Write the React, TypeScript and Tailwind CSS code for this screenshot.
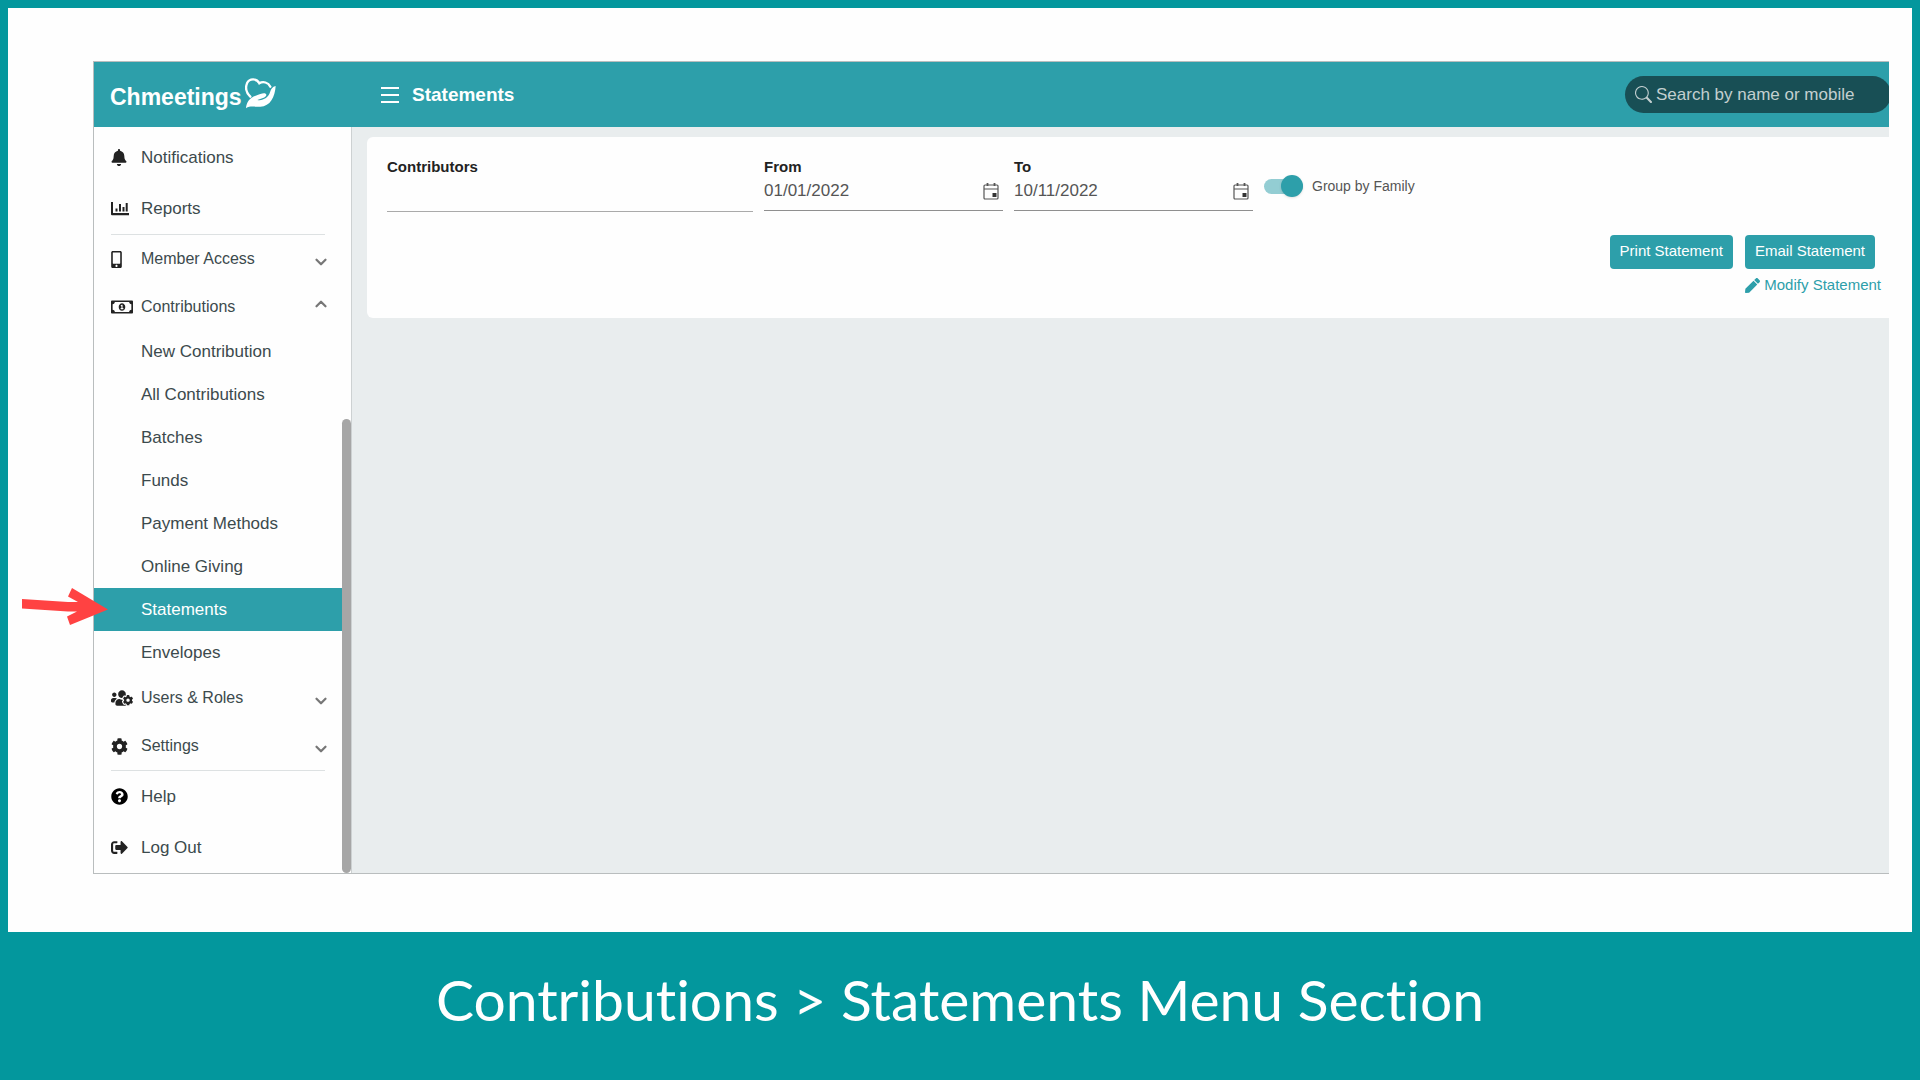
import { useState } from 'react';
import type { ReactNode } from 'react';
import { ChevronDown, ChevronUp } from 'lucide-react';
import { FaBell, FaCog, FaMobileAlt, FaPen, FaQuestionCircle, FaRegMoneyBillAlt, FaSignOutAlt, FaUsersCog } from 'react-icons/fa';
import { BsSearch } from 'react-icons/bs';

const contributionLinks = [
    'New Contribution',
    'All Contributions',
    'Batches',
    'Funds',
    'Payment Methods',
    'Online Giving',
    'Statements',
    'Envelopes',
];

function LogoMark() {
    return (
        <svg viewBox="0 0 96 96" className="w-8 h-8 mb-1" fill="none" aria-hidden="true">
            <path
                d="M16 59C3 46 1 31 6 19C13 4 35 3 43 19C54 12 70 16 76 29"
                stroke="currentColor"
                strokeWidth="7"
                strokeLinecap="round"
            />
            <path
                d="M3 94C4 76 14 62 32 56C46 52 54 47 62 50C67 54 62 60 56 62L37 69C54 72 70 62 75 46C78 36 82 29 92 27C90 60 76 88 46 89C26 90 14 86 3 94Z"
                fill="currentColor"
            />
        </svg>
    );
}

function ChartIcon() {
    return (
        <svg viewBox="0 0 18 14" className="w-[18px] h-[14px]" fill="currentColor" aria-hidden="true">
            <path d="M0 0h2v11h16v2.200H1Q0 13.200 0 12.200Z" />
            <path d="M4.500 6.500h2v3h-2zM8 2h2v7.500H8zM11.500 5h2v4.500h-2zM14.700 1h2v8.500h-2z" />
        </svg>
    );
}

function CalendarIcon() {
    return (
        <svg viewBox="0 0 16 18" className="w-4 h-[18px]" fill="none" stroke="#555" aria-hidden="true">
            <rect x="1" y="3" width="14" height="14" rx="1" strokeWidth="1.200" />
            <path d="M1 7h14" strokeWidth="1" />
            <path d="M4.500 1v3M11.500 1v3" strokeWidth="1.800" />
            <rect x="9.500" y="11" width="4" height="4" fill="#333" stroke="none" />
        </svg>
    );
}

function NavLink({ icon, label }: { icon: ReactNode; label: string }) {
    return (
        <a href="#" className="flex items-center h-[51px] pl-[17px] text-[17px] text-[#3c4a4d]">
            <span className="w-[30px] text-[#222]">{icon}</span>
            {label}
        </a>
    );
}

function NavGroup({ icon, label, open, onClick }: { icon: ReactNode; label: string; open?: boolean; onClick?: () => void }) {
    const Chevron = open ? ChevronUp : ChevronDown;
    return (
        <button
            type="button"
            onClick={onClick}
            aria-expanded={!!open}
            className="flex items-center w-full h-12 pl-[17px] pr-3 text-base text-[#3c4a4d]"
        >
            <span className="w-[30px] text-[#222]">{icon}</span>
            {label}
            <Chevron className={`ml-auto w-[18px] h-[18px] text-[#777] ${open ? 'mb-1.5' : 'mt-1.5'}`} strokeWidth={3} />
        </button>
    );
}

function DateField({ id, label, value }: { id: string; label: string; value: string }) {
    return (
        <div className="w-[239px]">
            <label htmlFor={id} className="block text-[15px] leading-5 font-bold text-[#222]">
                {label}
            </label>
            <div className="flex items-center h-[34px] pr-1 pb-[5px] border-b border-[#8f8f8f]">
                <input id={id} type="text" defaultValue={value} className="flex-1 min-w-0 text-[17px] text-[#555] outline-none" />
                <button type="button" aria-label={`Choose ${label} date`}>
                    <CalendarIcon />
                </button>
            </div>
        </div>
    );
}

export default function App() {
    const [open, setOpen] = useState(true);
    const [active, setActive] = useState('Statements');

    return (
        <div className="min-h-screen flex flex-col bg-[#03979d] font-['Liberation_Sans',Arial,sans-serif]">
            <div className="flex-1 flex flex-col mx-2 mt-2 bg-[#fefefe] pt-[53px] pb-[58px] pl-[85px] pr-[23px]">
                <div className="flex-1 flex flex-col border-l border-y border-[#b9bdbe]">
                    {/* Top bar */}
                    <header className="flex items-center h-[65px] bg-[#2d9faa] text-white overflow-hidden">
                        <div className="flex items-center w-[287px] pl-4 gap-[3px]">
                            <span className="pt-1.5 text-[23px] font-bold">Chmeetings</span>
                            <LogoMark />
                        </div>
                        <button type="button" aria-label="Toggle menu" className="flex flex-col gap-[5px]">
                            <span className="w-[18px] h-0.5 bg-white" />
                            <span className="w-[18px] h-0.5 bg-white" />
                            <span className="w-[18px] h-0.5 bg-white" />
                        </button>
                        <h1 className="ml-[13px] pt-0.5 text-[19px] font-bold">Statements</h1>
                        <div className="ml-auto -mr-0.5 shrink-0 flex items-center gap-1 w-[266px] h-[37px] pl-[10px] rounded-full bg-[#184f55] text-[#c3cfd0]">
                            <BsSearch className="w-[17px] h-[17px] shrink-0" />
                            <input
                                type="search"
                                aria-label="Search by name or mobile"
                                placeholder="Search by name or mobile"
                                className="flex-1 min-w-0 text-[17px] placeholder:text-[#c3cfd0] outline-none"
                            />
                        </div>
                    </header>

                    <div className="flex-1 flex">
                        {/* Sidebar */}
                        <aside className="relative w-[258px] shrink-0 pt-[5px] pr-[9px] bg-[#fefefe] border-r border-[#cdd1d2]">
                            <nav>
                                <NavLink icon={<FaBell className="w-4 h-[17px]" />} label="Notifications" />
                                <NavLink icon={<ChartIcon />} label="Reports" />
                                <hr className="ml-[17px] mr-[17px] border-[#dde1e2]" />
                                <NavGroup icon={<FaMobileAlt className="w-[11px] h-[17px]" />} label="Member Access" />
                                <NavGroup
                                    icon={<FaRegMoneyBillAlt className="w-[22px] h-[18px]" />}
                                    label="Contributions"
                                    open={open}
                                    onClick={() => setOpen(!open)}
                                />
                                {open && (
                                    <ul className="-mt-px">
                                        {contributionLinks.map((item) => (
                                            <li key={item}>
                                                <a
                                                    href="#"
                                                    onClick={() => setActive(item)}
                                                    className={`flex items-center h-[43px] pl-[47px] text-[17px] ${
                                                        item === active ? 'bg-[#2d9faa] text-white' : 'text-[#3c4a4d]'
                                                    }`}
                                                >
                                                    {item}
                                                </a>
                                            </li>
                                        ))}
                                    </ul>
                                )}
                                <NavGroup icon={<FaUsersCog className="w-[22px] h-[18px]" />} label="Users & Roles" />
                                <NavGroup icon={<FaCog className="w-[17px] h-[17px]" />} label="Settings" />
                                <hr className="ml-[17px] mr-[17px] border-[#dde1e2]" />
                                <NavLink icon={<FaQuestionCircle className="w-[17px] h-[17px] text-black" />} label="Help" />
                                <NavLink icon={<FaSignOutAlt className="w-[17px] h-[17px]" />} label="Log Out" />
                            </nav>
                            {/* Scrollbar thumb */}
                            <div className="absolute right-0 bottom-0 w-[9px] h-[454px] rounded-full bg-[#a6a6a6]" />
                            {/* Pointer to the active item */}
                            <svg
                                viewBox="0 0 86 38"
                                className="absolute left-[-72px] top-[461px] w-[86px] h-[38px]"
                                fill="#ff4242"
                                aria-hidden="true"
                            >
                                <path d="M0 11L46 14L56 14L46 8.500L50 0L86 21.500L48 37L45 28.500L55 23.500L46 23.500L0 20.500Z" />
                            </svg>
                        </aside>

                        {/* Content */}
                        <main className="flex-1 min-w-0 pt-[10px] pl-[15px] bg-[#e9edee]">
                            <section className="h-[181px] pt-5 pl-5 rounded-l-md bg-[#fefefe]">
                                <div className="flex gap-[11px]">
                                    <div className="w-[366px]">
                                        <label htmlFor="contributors" className="block text-[15px] leading-5 font-bold text-[#222]">
                                            Contributors
                                        </label>
                                        <input
                                            id="contributors"
                                            type="text"
                                            className="block w-full h-[35px] text-[17px] text-[#555] border-b border-[#aaa] outline-none"
                                        />
                                    </div>
                                    <DateField id="from" label="From" value="01/01/2022" />
                                    <DateField id="to" label="To" value="10/11/2022" />
                                    <label className="flex items-center self-start gap-[9px] h-[22px] mt-[18px] text-sm text-[#555]">
                                        <input
                                            type="checkbox"
                                            role="switch"
                                            defaultChecked
                                            className="appearance-none flex items-center w-[39px] h-[15px] rounded-full bg-[#cfcfcf] checked:bg-[#93cdd3] checked:justify-end before:block before:w-[22px] before:h-[22px] before:shrink-0 before:rounded-full before:bg-[#f5f5f5] checked:before:bg-[#2d9faa] before:shadow-sm"
                                        />
                                        Group by Family
                                    </label>
                                </div>
                                <div className="flex justify-end gap-3 mt-[23px] pr-[14px]">
                                    <button type="button" className="h-[34px] px-[10px] pb-0.5 rounded-sm bg-[#2d9faa] text-[15px] text-white">
                                        Print Statement
                                    </button>
                                    <button type="button" className="h-[34px] px-[10px] pb-0.5 rounded-sm bg-[#2d9faa] text-[15px] text-white">
                                        Email Statement
                                    </button>
                                </div>
                                <div className="flex justify-end mt-[6px] pr-2">
                                    <a href="#" className="flex items-center gap-1 text-[15px] leading-5 text-[#2d9faa]">
                                        <FaPen className="w-[15px] h-[15px]" />
                                        Modify Statement
                                    </a>
                                </div>
                            </section>
                        </main>
                    </div>
                </div>
            </div>

            <h2 className="flex items-center justify-center h-[148px] pb-3 font-['Lato',sans-serif] text-[57px] text-white [font-variant-ligatures:none]">
                Contributions &gt; Statements Menu Section
            </h2>
        </div>
    );
}
